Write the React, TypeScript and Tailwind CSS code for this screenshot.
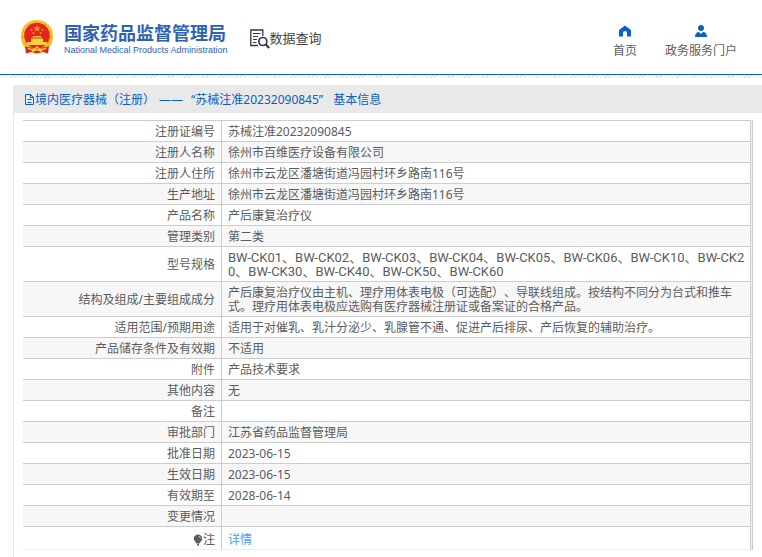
import type { ReactNode } from "react";

type Row = { label: string; value: ReactNode };

const rows: Row[] = [
  { label: "注册证编号", value: "苏械注准20232090845" },
  { label: "注册人名称", value: "徐州市百维医疗设备有限公司" },
  { label: "注册人住所", value: "徐州市云龙区潘塘街道冯园村环乡路南116号" },
  { label: "生产地址", value: "徐州市云龙区潘塘街道冯园村环乡路南116号" },
  { label: "产品名称", value: "产后康复治疗仪" },
  { label: "管理类别", value: "第二类" },
  {
    label: "型号规格",
    value: (
      <div className="-mr-1 font-['Roboto','Noto_Sans_CJK_SC',sans-serif] text-[13px] leading-[14px]">
        BW-CK01、BW-CK02、BW-CK03、BW-CK04、BW-CK05、BW-CK06、BW-CK10、BW-CK20、BW-CK30、BW-CK40、BW-CK50、BW-CK60
      </div>
    ),
  },
  {
    label: "结构及组成/主要组成成分",
    value:
      "产后康复治疗仪由主机、理疗用体表电极（可选配）、导联线组成。按结构不同分为台式和推车式。理疗用体表电极应选购有医疗器械注册证或备案证的合格产品。",
  },
  {
    label: "适用范围/预期用途",
    value: "适用于对催乳、乳汁分泌少、乳腺管不通、促进产后排尿、产后恢复的辅助治疗。",
  },
  { label: "产品储存条件及有效期", value: "不适用" },
  { label: "附件", value: "产品技术要求" },
  { label: "其他内容", value: "无" },
  { label: "备注", value: "" },
  { label: "审批部门", value: "江苏省药品监督管理局" },
  { label: "批准日期", value: "2023-06-15" },
  { label: "生效日期", value: "2023-06-15" },
  { label: "有效期至", value: "2028-06-14" },
  { label: "变更情况", value: "" },
];

function Emblem() {
  return (
    <svg viewBox="0 0 34 36" className="h-9 w-[34px] shrink-0" aria-hidden="true">
      <path d="M17 1C7 1 1 8 1 17c0 6 2 10 5 13v4l5-1 6 1 6-1 5 1v-4c3-3 5-7 5-13C33 8 27 1 17 1z" fill="#f3c02e" />
      <path d="M3 12l2 2M2 18l3 1M4 24l3-1M31 12l-2 2M32 18l-3 1M30 24l-3-1M8 5l2 2M26 5l-2 2" stroke="#dd9f1c" strokeWidth="1" />
      <circle cx="17" cy="16.500" r="12.800" fill="#e5251c" />
      <path d="M17 6l1 2.400h2.600l-2.100 1.600.8 2.500-2.300-1.500-2.300 1.500.8-2.500L13.400 8.400H16z" fill="#f4a62c" />
      <g fill="#f0932b">
        <circle cx="11.500" cy="11" r="1" />
        <circle cx="22.500" cy="11" r="1" />
        <circle cx="13.500" cy="14" r="1" />
        <circle cx="20.500" cy="14" r="1" />
      </g>
      <path d="M12 18.500l1.500-1.500h7l1.500 1.500zM11 19.500h12V23H11zM6.500 23h21l-1.500 3H8z" fill="#f8cf3c" />
      <path d="M5 27.500l7 1 5-1.500 5 1.500 7-1-1 7-5-1.500-6 1.500-6-1.500-5 1.500z" fill="#e0261c" />
      <path d="M8 29c3 2.500 6 2 9-1 3 3 6 3.500 9 1M12 32.500l5-2 5 2" stroke="#f8cf3c" strokeWidth="1.600" fill="none" />
    </svg>
  );
}

function SearchDocument() {
  return (
    <svg viewBox="0 0 20 20" className="size-5 shrink-0" fill="none" stroke="#34344a" aria-hidden="true">
      <path d="M8 16.500H.8V1h12v6" strokeWidth="1.300" />
      <path d="M3 4.500h7.500M3 7.500h5M3 10.500h4M3 13.500h3.500" strokeWidth="1" />
      <circle cx="12.800" cy="12.500" r="4" strokeWidth="1.700" />
      <path d="M15.800 15.500l3.500 3.500" strokeWidth="2.200" />
    </svg>
  );
}

export default function App() {
  return (
    <div className="bg-white font-['Noto_Sans','Noto_Sans_CJK_SC',sans-serif] text-xs text-[#5a5c60] [text-spacing-trim:space-all]">
      <header className="flex h-[75px] items-center justify-between border-b border-[#0b62c1] pr-[25px] pl-5">
        <div className="flex items-center">
          <Emblem />
          <div className="ml-2.5 pt-1.5 text-[#2f62b3]">
            <div className="text-lg leading-5 font-bold">国家药品监督管理局</div>
            <div className="font-['Liberation_Sans',sans-serif] text-[9px] leading-[14px]">
              National Medical Products Administration
            </div>
          </div>
          <div className="ml-[22px] flex items-center pt-1 text-[#444]">
            <SearchDocument />
            <span className="text-[13px]">数据查询</span>
          </div>
        </div>
        <nav className="flex gap-7 pt-3">
          <a href="#home" className="flex flex-col items-center gap-1">
            <svg viewBox="0 0 12 12" className="size-3" fill="#0b62c1" aria-hidden="true">
              <path d="M6 0.500L0 5v6.500h4V8a2 2 0 0 1 4 0v3.500h4V5z" />
            </svg>
            <span className="leading-5">首页</span>
          </a>
          <a href="#portal" className="flex flex-col items-center gap-1">
            <svg viewBox="0 0 12 12" className="size-3" fill="#0b62c1" aria-hidden="true">
              <circle cx="6" cy="3" r="3" />
              <path d="M0 12c0-3 1.500-5 4-5l2 2 2-2c2.500 0 4 2 4 5z" />
            </svg>
            <span className="leading-5">政务服务门户</span>
          </a>
        </nav>
      </header>
      <div className="h-[3px] bg-[repeating-linear-gradient(135deg,#e2e2e2_0_1px,#fff_1px_3px)]" />

      <main className="mt-[7px] ml-[13px] border-l border-[#e9e9e9] pb-[7px]">
        <h1 className="-ml-px flex h-7 items-center bg-[#e9e9e9] pt-0.5 pl-[11px] text-[#0b5fc4]">
          <svg viewBox="0 0 11 12" className="h-3 w-[11px]" fill="none" stroke="currentColor" aria-hidden="true">
            <path d="M1.500 .5h5l3 3v7h-8zM6.500 .5v3h3M3.500 5.500h4M3.500 8.500h4" strokeWidth="1" />
          </svg>
          <span>境内医疗器械（注册）</span>
          <span className="ml-1">——</span>
          <span className="ml-2">“苏械注准20232090845”</span>
          <span className="ml-2.5">基本信息</span>
        </h1>

        <div className="mt-[7px] mr-[9px] ml-[9px] border-r border-[#ccc] bg-[#eeeef4] pr-px">
          <table className="w-full border-separate border-spacing-0 border-t border-r border-[#ccc] bg-white leading-[14px]">
            <tbody>
              {rows.map((row) => (
                <tr key={row.label} className="even:bg-[#f7f7f7]">
                  <th scope="row" className="w-[199px] border-r border-b border-[#ccc] pt-1 pr-1.5 pb-0.5 text-right font-normal">
                    {row.label}
                  </th>
                  <td className="h-[21px] border-b border-[#ccc] px-1.5 pt-1 pb-0.5 break-all">{row.value}</td>
                </tr>
              ))}
              <tr>
                <th scope="row" className="border-r border-b border-r-[#ccc] border-b-[#eee] pt-1.5 pr-1.5 pb-0.5 font-normal">
                  <span className="flex items-center justify-end">
                    <svg viewBox="0 0 10 12" className="h-3 w-2.5" fill="#5a5c60" aria-hidden="true">
                      <path d="M5 0.500a4.200 4.200 0 0 1 4.200 4.200c0 2-2 2.800-2.700 4.800h-3C2.800 7.500 .8 6.700 .8 4.700A4.200 4.200 0 0 1 5 .5zM4 10h2v1.500H4z" />
                      <path d="M5.500 2.200Q7.500 2.500 7.500 4.500" fill="none" stroke="#ddd" strokeWidth=".8" />
                    </svg>
                    <span>注</span>
                  </span>
                </th>
                <td className="border-b border-[#eee] px-1.5 pt-1.5 pb-0.5">
                  <a href="#detail" className="text-[#409eff]">
                    详情
                  </a>
                </td>
              </tr>
            </tbody>
          </table>
        </div>
      </main>
    </div>
  );
}
